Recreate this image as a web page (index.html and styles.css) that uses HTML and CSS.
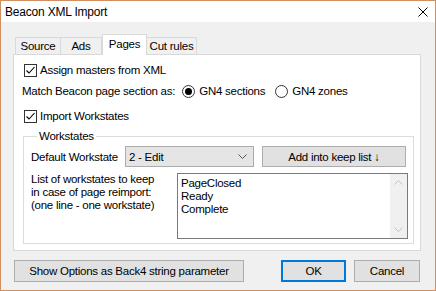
FILE: index.html
```html
<!DOCTYPE html>
<html lang="en">
  <head>
    <meta charset="UTF-8" />
    <title>Beacon XML Import</title>
    <link rel="stylesheet" href="styles.css">
  </head>
  <body>
    <div class="window">
      <div class="titlebar">
        <span class="title">Beacon XML Import</span>
        <svg class="close" width="10" height="10" viewBox="0 0 10 10">
          <path d="M0.5 0.5 L9.5 9.5 M9.5 0.5 L0.5 9.5" stroke="#000" stroke-width="1" fill="none" />
        </svg>
      </div>
      <div class="content">
        <div class="tabs">
          <div class="tab source">Source</div>
          <div class="tab ads">Ads</div>
          <div class="tab active">Pages</div>
          <div class="tab cut">Cut rules</div>
        </div>
        <div class="panel">
          <label class="check-row first">
            <span class="checkbox">
              <svg width="11" height="11" viewBox="0 0 11 11"><path d="M1.5 5.5 L4 8 L9.5 2" stroke="#000" stroke-width="1.1" fill="none" /></svg>
            </span>
            Assign masters from XML
          </label>
          <div class="match-row">
            <span>Match Beacon page section as:</span>
            <span class="radio checked"></span>
            <span>GN4 sections</span>
            <span class="radio second"></span>
            <span>GN4 zones</span>
          </div>
          <label class="check-row">
            <span class="checkbox">
              <svg width="11" height="11" viewBox="0 0 11 11"><path d="M1.5 5.5 L4 8 L9.5 2" stroke="#000" stroke-width="1.1" fill="none" /></svg>
            </span>
            Import Workstates
          </label>
          <fieldset class="group">
            <legend>Workstates</legend>
            <div class="ws-row">
              <span class="ws-label">Default Workstate</span>
              <div class="combo">
                <span>2 - Edit</span>
                <svg width="9" height="5" viewBox="0 0 9 5"><path d="M0.5 0.5 L4.5 4.5 L8.5 0.5" stroke="#555" fill="none" /></svg>
              </div>
              <div class="btn add-btn">Add into keep list ↓</div>
            </div>
            <div class="list-row">
              <div class="list-label">List of workstates to keep<br>in case of page reimport:<br>(one line - one workstate)</div>
              <div class="listbox">
                <div class="list-text">PageClosed<br>Ready<br>Complete</div>
                <div class="scrollbar">
                  <svg width="9" height="5" viewBox="0 0 9 5"><path d="M0.5 4.5 L4.5 0.5 L8.5 4.5" stroke="#c2c2c2" fill="none" /></svg>
                  <svg width="9" height="5" viewBox="0 0 9 5"><path d="M0.5 0.5 L4.5 4.5 L8.5 0.5" stroke="#c2c2c2" fill="none" /></svg>
                </div>
              </div>
            </div>
          </fieldset>
        </div>
        <div class="footer">
          <div class="btn options-btn">Show Options as Back4 string parameter</div>
          <div class="btn ok-btn">OK</div>
          <div class="btn cancel-btn">Cancel</div>
        </div>
      </div>
    </div>
  </body>
</html>
```

FILE: styles.css
```css
body {
  margin: 0;
  font-family: "Liberation Sans", Arial, sans-serif;
  font-size: 11.5px;
  letter-spacing: -0.25px;
  color: #000;
}

.window {
  width: 436px;
  height: 291px;
  box-sizing: border-box;
  border: 1px solid #cf8f63;
  background: #f0f0f0;
  display: flex;
  flex-direction: column;
}

.titlebar {
  height: 21px;
  background: #fff;
  display: flex;
  align-items: center;
  padding-left: 4px;
  padding-right: 7px;
  font-size: 12px;
  letter-spacing: -0.2px;
}

.title {
  flex: 1;
}

.content {
  padding: 12px 0 0 12px;
}

.tabs {
  display: flex;
  align-items: flex-end;
  height: 20px;
  padding-left: 2px;
}

.tab {
  height: 17px;
  line-height: 16px;
  box-sizing: border-box;
  border: 1px solid #d9d9d9;
  border-bottom: none;
  margin-right: -1px;
  background: #f0f0f0;
  text-align: center;
  white-space: nowrap;
}

.tab.source { width: 46px; }
.tab.ads { width: 42px; }
.tab.cut { width: 51px; }

.tab.active {
  width: 45px;
  height: 21px;
  line-height: 18px;
  margin-left: 1px;
  margin-bottom: -1px;
  background: #fff;
  position: relative;
  z-index: 1;
}

.panel {
  width: 408px;
  height: 197px;
  box-sizing: border-box;
  border: 1px solid #d9d9d9;
  background: #fff;
  padding: 7px 0 0 8px;
}

.check-row {
  display: flex;
  align-items: center;
  gap: 3px;
  height: 16px;
  margin-left: 2px;
  margin-top: 9px;
}

.check-row.first {
  margin-top: 0;
}

.checkbox {
  width: 13px;
  height: 13px;
  box-sizing: border-box;
  border: 1px solid #333;
  display: flex;
  align-items: center;
  justify-content: center;
}

.match-row {
  display: flex;
  align-items: center;
  height: 16px;
  margin-top: 5px;
}

.radio {
  width: 13px;
  height: 13px;
  box-sizing: border-box;
  border: 1px solid #333;
  border-radius: 50%;
  margin: 0 4px 0 7px;
  display: flex;
  align-items: center;
  justify-content: center;
}

.radio.second {
  margin-left: 10px;
}

.radio.checked::after {
  content: "";
  width: 7px;
  height: 7px;
  border-radius: 50%;
  background: #000;
}

.group {
  margin: 5px 6px 0 1px;
  padding: 3px 5px 4px 7px;
  border: 1px solid #dcdcdc;
}

.group legend {
  margin-left: 6px;
  padding: 0 2px;
  line-height: 14px;
}

.ws-row {
  display: flex;
  align-items: center;
  height: 21px;
}

.ws-label {
  width: 94px;
  white-space: nowrap;
}

.combo {
  width: 129px;
  height: 21px;
  box-sizing: border-box;
  border: 1px solid #acacac;
  background: #e5e5e5;
  display: flex;
  align-items: center;
  justify-content: space-between;
  padding: 0 6px 0 3px;
}

.btn {
  height: 21px;
  box-sizing: border-box;
  border: 1px solid #adadad;
  background: #e1e1e1;
  display: flex;
  align-items: center;
  justify-content: center;
  white-space: nowrap;
}

.add-btn {
  width: 144px;
  margin-left: 8px;
}

.list-row {
  display: flex;
  margin-top: 6px;
}

.list-label {
  width: 146px;
  line-height: 13px;
}

.listbox {
  width: 231px;
  height: 66px;
  box-sizing: border-box;
  border: 1px solid #7a7a7a;
  display: flex;
  justify-content: space-between;
}

.list-text {
  padding: 3px 0 0 3px;
  line-height: 13px;
}

.scrollbar {
  width: 17px;
  background: #f0f0f0;
  display: flex;
  flex-direction: column;
  justify-content: space-between;
  align-items: center;
  padding: 6px 0;
}

.footer {
  display: flex;
  margin-top: 9px;
  width: 406px;
  padding-left: 1px;
}

.footer .btn {
  height: 22px;
}

.options-btn {
  width: 230px;
}

.ok-btn {
  width: 65px;
  margin-left: auto;
  border: 2px solid #0078d7;
}

.cancel-btn {
  width: 66px;
  margin-left: 8px;
}
```
